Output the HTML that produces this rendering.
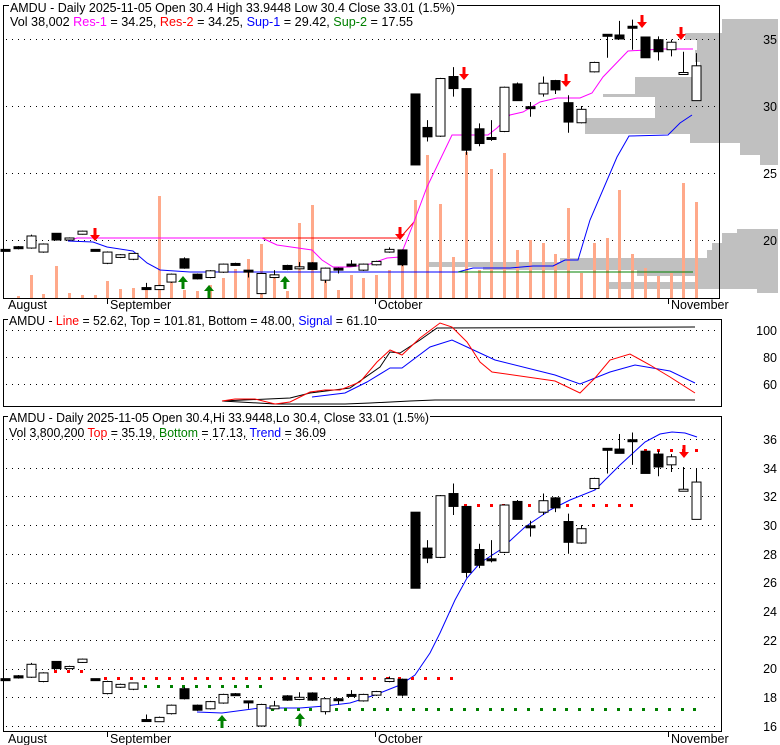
<!DOCTYPE html>
<html><head><meta charset="utf-8"><style>
html,body{margin:0;padding:0;background:#fff;width:780px;height:745px;overflow:hidden}
svg{display:block}
text{font-family:"Liberation Sans",Arial,sans-serif;font-size:12.5px}
</style></head><body>
<svg id="s" width="780" height="745" xmlns="http://www.w3.org/2000/svg">
<g id="prof" fill="#c0c0c0"></g>
<g id="grid" stroke="#000" stroke-dasharray="1 5" stroke-width="1"></g>
<g id="vol" fill="#ffa98a"></g>
<polyline fill="none" stroke="#ff0000" stroke-width="1" points="262,238 390,238 400,238 414,222"/>
<polyline fill="none" stroke="#ff00ff" stroke-width="1" points="68,241 77,238 262,238 277,245 312,250 322,260 333,267 350,267 370,264 387,258 400,257 412,227 427,187 452,135 488,135 497,128 510,115 523,112 540,102 557,98 580,98 592,93 603,77 628,51 663,49 693,49"/>
<polyline fill="none" stroke="#0000ff" stroke-width="1" points="68,241 93,242 107,247 133,251 147,263 160,270 190,272 458,272 473,268 510,268 533,266 553,266 565,260 578,260 590,220 617,157 629,136 668,135 680,123 692,115"/>
<line x1="458" y1="272" x2="693" y2="272" stroke="#008000" stroke-width="1"/>
<polyline fill="none" stroke="#000" points="222,401 290,398 310,393 350,388 380,367 390,352 400,353 420,340 437,328 695,327"/>
<polyline fill="none" stroke="#000" points="222,401 275,404 345,404 370,403 410,401 435,400 695,400"/>
<polyline fill="none" stroke="#0000ff" points="312,397 345,393 367,382 390,368 402,368 430,347 452,340 467,347 495,360 555,375 580,384 610,372 635,365 670,371 695,383"/>
<polyline fill="none" stroke="#ff0000" points="222,401 235,399 255,399 275,404 290,402 310,392 325,390 340,390 360,382 377,362 390,350 402,355 420,338 440,323 452,327 467,342 480,362 492,372 555,381 580,393 595,378 610,360 630,354 650,365 670,377 695,393"/>
<polyline fill="none" stroke="#0000ff" points="197,712 222,713 260,708 300,708 325,706 350,703 375,695 400,685 415,675 430,653 440,633 455,600 467,578 480,563 500,550 525,527 550,510 570,500 595,490 620,465 645,442 660,434 672,432 685,433 697,437"/>
<g id="dots"></g>
<g id="candles"></g>
<g id="arrows"></g>
<g fill="none" stroke="#000" stroke-width="1">
<rect x="3.5" y="5.5" width="716" height="293"/>
<rect x="3.5" y="319.5" width="718" height="87"/>
<rect x="3.5" y="416.5" width="718" height="315"/>
<line x1="107.5" y1="298" x2="107.5" y2="304"/><line x1="375.5" y1="298" x2="375.5" y2="304"/><line x1="668.5" y1="298" x2="668.5" y2="304"/>
<line x1="107.5" y1="731" x2="107.5" y2="737"/><line x1="375.5" y1="731" x2="375.5" y2="737"/><line x1="668.5" y1="731" x2="668.5" y2="737"/>
</g>
<rect x="9" y="0" width="448" height="12" fill="#fff"/>
<text x="10" y="12" textLength="445" lengthAdjust="spacingAndGlyphs">AMDU - Daily 2025-11-05 Open 30.4  High 33.9448  Low 30.4  Close 33.01 (1.5%)</text>
<text x="10" y="26" textLength="403" lengthAdjust="spacingAndGlyphs">Vol 38,002 <tspan fill="#ff00ff">Res-1</tspan> = 34.25, <tspan fill="#ff0000">Res-2</tspan> = 34.25, <tspan fill="#0000ff">Sup-1</tspan> = 29.42, <tspan fill="#008000">Sup-2</tspan> = 17.55</text>
<rect x="8" y="314" width="370" height="10" fill="#fff"/>
<text x="9" y="325" textLength="368" lengthAdjust="spacingAndGlyphs">AMDU - <tspan fill="#ff0000">Line</tspan> = 52.62, Top = 101.81, Bottom = 48.00, <tspan fill="#0000ff">Signal</tspan> = 61.10</text>
<rect x="8" y="410" width="422" height="10" fill="#fff"/>
<text x="9" y="422" textLength="420" lengthAdjust="spacingAndGlyphs">AMDU - Daily 2025-11-05 Open 30.4,Hi 33.9448,Lo 30.4, Close 33.01 (1.5%)</text>
<text x="9" y="437" textLength="317" lengthAdjust="spacingAndGlyphs">Vol 3,800,200 <tspan fill="#ff0000">Top</tspan> = 35.19, <tspan fill="#008000">Bottom</tspan> = 17.13, <tspan fill="#0000ff">Trend</tspan> = 36.09</text>
<g>
<text x="8" y="309">August</text><text x="110" y="309">September</text><text x="378" y="309">October</text><text x="671" y="309">November</text>
<text x="8" y="743">August</text><text x="110" y="743">September</text><text x="378" y="743">October</text><text x="671" y="743">November</text>
</g>
<g text-anchor="end">
<text x="777" y="44">35</text><text x="777" y="111">30</text><text x="777" y="178">25</text><text x="777" y="245">20</text>
<text x="777" y="335">100</text><text x="777" y="362">80</text><text x="777" y="389">60</text>
<text x="777" y="444">36</text><text x="777" y="473">34</text><text x="777" y="501">32</text><text x="777" y="530">30</text><text x="777" y="559">28</text><text x="777" y="587">26</text><text x="777" y="616">24</text><text x="777" y="645">22</text><text x="777" y="673">20</text><text x="777" y="702">18</text><text x="777" y="731">16</text>
</g>
</svg>
<script>
var NS="http://www.w3.org/2000/svg";
function el(p,t,a){var e=document.createElementNS(NS,t);for(var k in a)e.setAttribute(k,a[k]);document.getElementById(p).appendChild(e);return e;}
[[722,19,14],[685,33,7],[697,40,10],[695,50,12],[700,62,15],[635,77,17],[603,94,3],[655,97,21],[585,118,16],[690,134,9],[740,143,12],[760,155,10],
[737,229,4],[722,233,10],[712,243,7],[707,250,8],[560,258,4],[428,262,5],[483,267,3],[637,270,6],[697,276,6],[607,282,7],[757,289,4]].forEach(function(r){el("prof","rect",{x:r[0],y:r[1],width:778-r[0],height:r[2]});});
function hg(y){el("grid","line",{x1:6,x2:718,y1:y+.5,y2:y+.5});}
[39,106,173,240].forEach(hg);[330,357,384].forEach(hg);
for(var p=16;p<=36;p+=2)hg(Math.round(439+(36-p)*14.35));
var D=[[19.3,19.3,19.3,19.3],[19.5,19.35,19.55,19.3],[19.4,20.3,20.4,19.35],[19.1,19.7,19.75,19.05],[20.5,20.0,20.5,19.95],[20.0,20.15,20.2,19.95],[20.43,20.66,20.7,20.4],[19.3,19.22,19.3,19.15],[18.26,19.1,19.15,18.2],[18.7,18.9,18.95,18.65],[18.56,19.0,19.0,18.5],[16.45,16.45,16.8,16.4],[16.3,16.6,16.65,16.3],[16.86,17.45,17.5,16.8],[18.6,17.9,18.7,17.85],[17.45,17.1,17.5,17.05],[17.2,17.7,17.75,17.15],[17.6,18.2,18.25,17.55],[18.25,18.15,18.3,18.1],[17.75,17.7,17.75,17.2],[16.0,17.5,17.55,15.95],[17.2,17.4,17.75,17.15],[18.1,17.8,18.15,17.75],[17.85,18.0,18.35,17.8],[18.3,17.8,18.35,17.75],[17.0,17.9,17.95,16.8],[17.9,17.8,17.95,17.5],[18.2,18.1,18.5,18.05],[17.75,18.2,18.25,17.7],[18.15,18.4,18.45,18.1],[19.1,19.3,19.45,19.05],[19.26,18.15,19.3,18.05],[30.9,25.6,30.9,25.6],[28.4,27.7,28.95,27.35],[27.75,32.05,32.1,27.7],[32.2,31.3,32.9,30.7],[31.3,26.7,31.3,26.35],[28.3,27.2,28.7,27.0],[27.65,27.55,28.95,27.4],[28.1,31.4,31.45,28.05],[31.65,30.4,31.75,30.4],[29.95,29.85,30.3,29.2],[30.9,31.7,32.2,30.7],[31.9,31.2,31.95,30.9],[30.25,28.8,30.8,28.0],[28.75,29.75,30.0,28.7],[32.55,33.25,33.3,32.5],[35.35,35.25,35.35,33.6],[35.3,35.0,36.35,35.0],[35.95,35.85,36.45,34.2],[35.15,33.6,35.15,33.6],[34.95,34.05,35.2,33.4],[34.2,34.76,34.95,33.7],[32.4,32.5,34.05,32.4],[30.4,33.0,33.95,30.4]];
var V=[298,296,275,294,266,293,295,295,281,289,288,289,196,279,290,291,285,278,269,259,244,277,291,223,205,281,290,275,278,275,270,262,200,155,204,257,152,270,169,153,250,240,243,254,208,273,243,238,190,254,268,276,273,183,202];
function X(i){return Math.round(5+i*12.8);}
V.forEach(function(t,i){if(t<298)el("vol","rect",{x:X(i)-1,y:t,width:3,height:298-t});});
function drawC(i,d,Y){var x=X(i)+.5,o=Y(d[0]),c=Y(d[1]),h=Y(d[2]),l=Y(d[3]);
 el("candles","line",{x1:x,x2:x,y1:h,y2:l,stroke:"#000"});
 var top=Math.min(o,c),bh=Math.max(Math.abs(o-c),2),white=d[1]>d[0];
 el("candles","rect",{x:x-4.5,y:top,width:9,height:bh,fill:white?"#fff":"#000",stroke:"#000","stroke-width":1});}
D.forEach(function(d,i){drawC(i,d,function(p){return Math.min(297,39+(35-p)*13.4);});drawC(i,d,function(p){return 439+(36-p)*14.35;});});
function dots(col,y,x1,x2){for(var x=x1;x<=x2;x+=12.8)el("dots","rect",{x:Math.round(x)-1,y:y-1,width:3,height:3,fill:col});}
dots("#ff0000",671,55,82);dots("#ff0000",678,105,455);dots("#ff0000",505,465,633);dots("#ff0000",450,645,697);
dots("#008000",686,145,262);dots("#008000",709,272,697);
function down(x,y){el("arrows","path",{d:"M"+(x-1.5)+" "+(y-13)+"h3v7h3.5l-5 6l-5-6h3.5z",fill:"#ff0000"});}
function up(x,y){el("arrows","path",{d:"M"+(x-1.5)+" "+(y+6)+"h3v-7h3.5l-5-6l-5 6h3.5z",fill:"#008000"});}
[[95,241],[400,240],[464,80],[566,87],[642,28],[681,40],[684,458]].forEach(function(a){down(a[0],a[1]);});
[[183,283],[209,292],[285,283],[222,722],[300,720]].forEach(function(a){up(a[0],a[1]);});
</script>
</body></html>
